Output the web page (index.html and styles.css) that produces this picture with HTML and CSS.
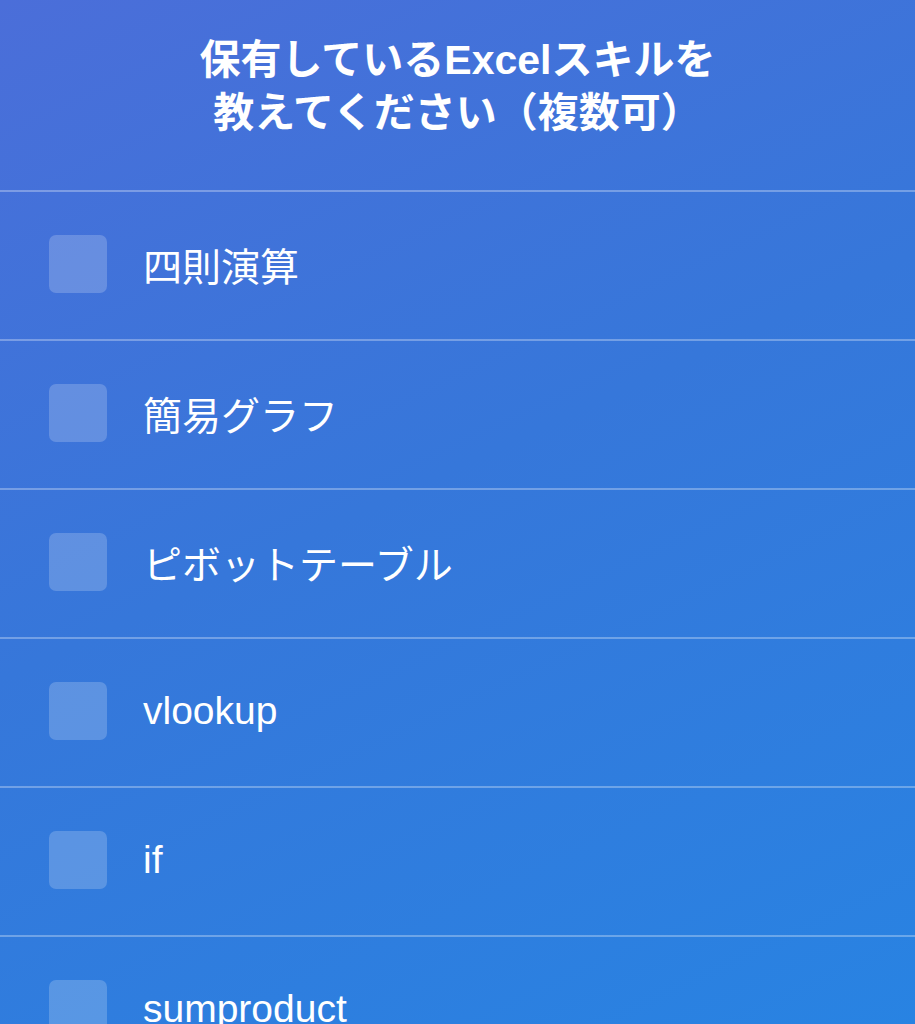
FILE: index.html
```html
<!DOCTYPE html>
<html lang="ja">
<head>
    <meta charset="UTF-8">
    <meta name="viewport" content="width=device-width, initial-scale=1.0">
    <title>Excelスキル</title>
    <link rel="stylesheet" href="styles.css">
</head>
<body>
    <div class="question">
        <h1>保有しているExcelスキルを<br>教えてください（複数可）</h1>
    </div>

    <ul class="choices">
        <li class="choice"><span class="box"></span><span class="label">四則演算</span></li>
        <li class="choice"><span class="box"></span><span class="label">簡易グラフ</span></li>
        <li class="choice"><span class="box"></span><span class="label">ピボットテーブル</span></li>
        <li class="choice"><span class="box"></span><span class="label">vlookup</span></li>
        <li class="choice"><span class="box"></span><span class="label">if</span></li>
        <li class="choice"><span class="box"></span><span class="label">sumproduct</span></li>
    </ul>
</body>
</html>
```

FILE: styles.css
```css
html {
    background: #2f79dc;
}
body {
    margin: 0;
    min-height: 1024px;
    font-family: 'Liberation Sans', 'Noto Sans CJK JP', sans-serif;
    color: #fff;
    background: linear-gradient(155deg, #4b6ed9 0%, #3677da 45%, #2784e3 100%);
    overflow: hidden;
}
.question {
    box-sizing: border-box;
    height: 190px;
    padding-top: 34px;
    text-align: center;
}
h1 {
    margin: 0;
    font-size: 41px;
    line-height: 53px;
    font-weight: bold;
}
.choices {
    list-style: none;
    margin: 0;
    padding: 0;
}
.choice {
    display: flex;
    align-items: center;
    height: 147px;
    border-top: 2px solid rgba(255, 255, 255, 0.3);
    padding-left: 49px;
}
.box {
    width: 58px;
    height: 58px;
    border-radius: 7px;
    background-color: rgba(255, 255, 255, 0.2);
    margin-right: 36px;
    margin-top: -4px;
}
.label {
    font-size: 39px;
    margin-top: -3px;
}
```
